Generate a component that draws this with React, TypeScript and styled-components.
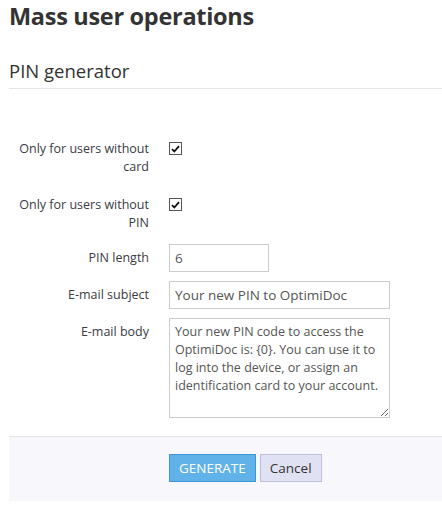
import React from "react"
import styled, { createGlobalStyle } from "styled-components"

const GlobalStyle = createGlobalStyle`
  html, body {
    margin: 0;
    padding: 0;
    background: #ffffff;
  }
  body {
    font-family: "Open Sans", "Noto Sans", sans-serif;
    color: #333333;
  }
`

const Page = styled("div")`
  padding: 0 0 0 9px;
  width: 433px;
`

const Title = styled("h1")`
  margin: 0;
  padding-top: 2px;
  font-size: 23.5px;
  line-height: 28px;
  font-weight: 700;
  color: #333333;
  letter-spacing: -0.3px;
`

const SectionTitle = styled("h2")`
  margin: 0;
  padding-top: 28px;
  padding-bottom: 4px;
  font-size: 18.5px;
  line-height: 26px;
  font-weight: 400;
  color: #333333;
  border-bottom: 1px solid #e5e5e5;
`

const Form = styled("form")`
  padding-top: 51px;
`

const Row = styled("div")<{ $space: number }>`
  display: grid;
  grid-template-columns: 140px 1fr;
  column-gap: 20px;
  margin-bottom: ${p => p.$space}px;
`

const Label = styled("label")<{ $pad: number }>`
  text-align: right;
  font-size: 12.5px;
  line-height: 18px;
  padding-top: ${p => p.$pad}px;
  color: #3b3a45;
`

const CheckBox = styled("span")`
  display: flex;
  align-items: center;
  justify-content: center;
  width: 11px;
  height: 11px;
  margin-top: 2px;
  border: 1px solid #555555;
  background: #ffffff;
`

const TextInput = styled("input")<{ $width: number }>`
  display: block;
  box-sizing: border-box;
  width: ${p => p.$width}px;
  height: 28px;
  padding: 0 5px;
  border: 1px solid #cccccc;
  font-family: inherit;
  font-size: 13.5px;
  color: #555555;
  outline: none;
`

const TextArea = styled("textarea")`
  display: block;
  box-sizing: border-box;
  width: 221px;
  height: 100px;
  padding: 4px 5px;
  border: 1px solid #cccccc;
  font-family: inherit;
  font-size: 12.5px;
  line-height: 18px;
  color: #555555;
  outline: none;
  resize: vertical;
`

const Footer = styled("div")`
  margin-top: 18px;
  height: 65px;
  background: #f7f7fc;
  border-top: 1px solid #e3e3ea;
  display: flex;
  align-items: flex-start;
  padding-left: 160px;
  padding-top: 17px;
  box-sizing: border-box;
  gap: 4px;
`

const Button = styled("button")<{ $primary?: boolean }>`
  height: 28px;
  padding: 0 9px;
  font-family: inherit;
  font-size: 13.5px;
  border: 1px solid ${p => (p.$primary ? "#3d95dc" : "#bdbee2")};
  background: ${p => (p.$primary ? "#62b2ea" : "#e0e2f3")};
  color: ${p => (p.$primary ? "#ffffff" : "#333333")};
  cursor: pointer;
`

function Check() {
  return (
    <CheckBox>
      <svg width="9" height="8" viewBox="0 0 9 8">
        <path d="M1 4.2 L3.3 6.5 L8 1.2" fill="none" stroke="#111" strokeWidth="1.8" />
      </svg>
    </CheckBox>
  )
}

export default function App() {
  return (
    <Page>
      <GlobalStyle />
      <Title>Mass user operations</Title>
      <SectionTitle>PIN generator</SectionTitle>
      <Form onSubmit={e => e.preventDefault()}>
        <Row $space={20}>
          <Label $pad={0}>Only for users without card</Label>
          <div><Check /></div>
        </Row>
        <Row $space={12}>
          <Label $pad={0}>Only for users without PIN</Label>
          <div><Check /></div>
        </Row>
        <Row $space={9}>
          <Label $pad={5}>PIN length</Label>
          <div><TextInput $width={100} defaultValue="6" /></div>
        </Row>
        <Row $space={9}>
          <Label $pad={5}>E-mail subject</Label>
          <div><TextInput $width={221} defaultValue="Your new PIN to OptimiDoc" /></div>
        </Row>
        <Row $space={0}>
          <Label $pad={5}>E-mail body</Label>
          <div>
            <TextArea defaultValue="Your new PIN code to access the OptimiDoc is: {0}. You can use it to log into the device, or assign an identification card to your account." />
          </div>
        </Row>
        <Footer>
          <Button $primary type="submit">GENERATE</Button>
          <Button type="button">Cancel</Button>
        </Footer>
      </Form>
    </Page>
  )
}
